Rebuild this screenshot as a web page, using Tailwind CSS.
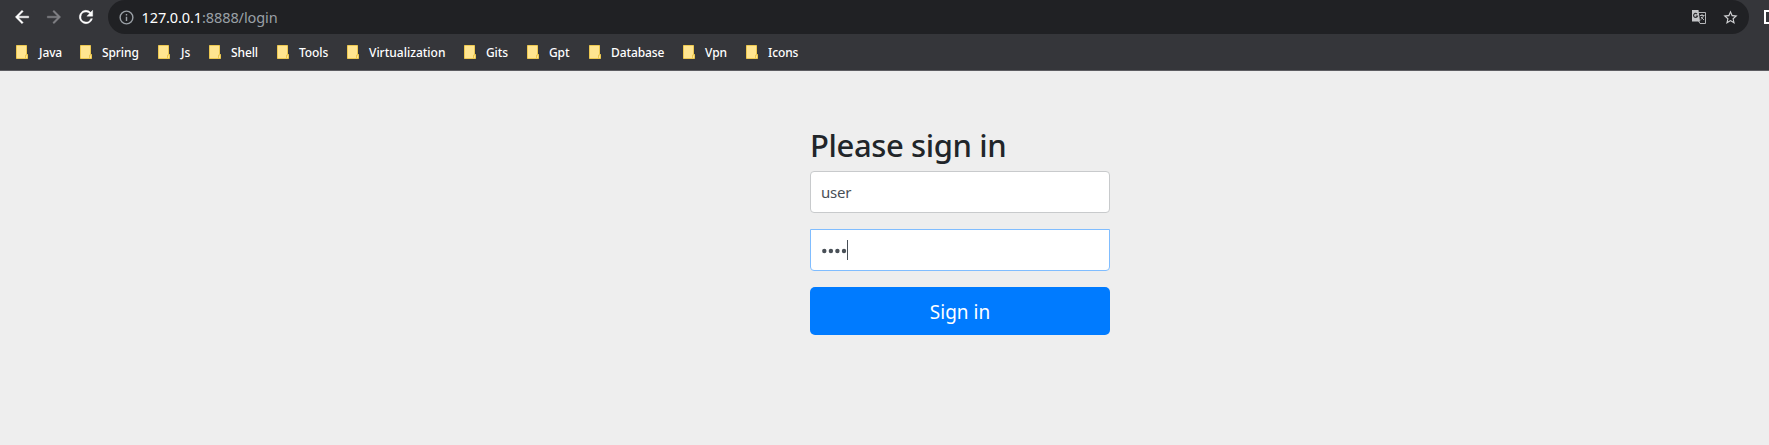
<!DOCTYPE html>
<html lang="en"><head><meta charset="utf-8"><title>Please sign in</title>
<script src="https://cdn.jsdelivr.net/npm/@tailwindcss/browser@4"></script></head>
<body class="w-[1769px] h-[445px] overflow-hidden bg-[#eeeeee] font-['Noto_Sans',sans-serif]">
<svg class="hidden"><symbol id="folder" viewBox="0 0 12 14"><path d="M.5.5h10v9h1v4H.5z" fill="#ffe590" stroke="#edc850"/><path d="M9.500 13.500v-3.500h2" fill="none" stroke="#edc850"/></symbol></svg>
<header class="h-[71px] bg-[#35363a] border-b border-[#5c5c61]">
<div class="flex h-[34px] items-center overflow-hidden">
<nav class="flex w-[108px] shrink-0 items-center pl-3 gap-2">
<svg class="size-5" viewBox="0 0 24 24" fill="#fff" stroke="#fff" stroke-width=".5"><path d="M20 11H7.830l5.590-5.590L12 4l-8 8 8 8 1.410-1.410L7.830 13H20z"/></svg>
<svg class="size-5 ml-1" viewBox="0 0 24 24" fill="#808185" stroke="#808185" stroke-width=".5"><path d="M12 4l-1.410 1.410L16.170 11H4v2h12.170l-5.580 5.590L12 20l8-8z"/></svg>
<svg class="size-5 ml-1" viewBox="0 0 24 24" fill="#fff" stroke="#fff" stroke-width=".5"><path d="M17.650 6.350A8 8 0 1 0 19.730 14h-2.080A6 6 0 1 1 12 6c1.660 0 3.140.690 4.220 1.780L13 11h7V4z"/></svg>
</nav>
<div class="flex h-[34px] w-[1641px] shrink-0 items-center rounded-r-full rounded-l-full bg-[#202124] pl-[9.500px] pr-[10px]">
<svg class="size-[17px]" viewBox="0 0 24 24" fill="#9aa0a6"><path d="M11 7h2v2h-2zm0 4h2v6h-2zm1-9a10 10 0 1 0 0 20 10 10 0 0 0 0-20m0 18a8 8 0 1 1 0-16 8 8 0 0 1 0 16"/></svg>
<span class="ml-[7px] -mt-px text-[14.500px] leading-5 tracking-[-0.1px] text-[#9aa0a6] whitespace-nowrap"><span class="text-white">127.0.0.1</span>:8888/login</span>
<svg class="ml-auto h-4 w-4" viewBox="0 0 16 16"><path d="M1 1h6.500L9 12.500H1z" fill="#c4c5c7"/><path d="M7 3.500h7.500v11H9L7.500 12" fill="none" stroke="#b5b6b8"/><path d="M6 5a2 2 0 1 0 .5 2H4.800" fill="none" stroke="#303134" stroke-width="1.200"/><path d="M9 6.500h4.500M11 5v1.500M12.500 6.500C12 9 10.500 10 9.500 11M10 8l3 3" fill="none" stroke="#b5b6b8"/></svg>
<svg class="ml-[15px] size-[17px]" viewBox="0 0 24 24" fill="#d0d1d3"><path d="m22 9.240-7.190-.620L12 2 9.190 8.630 2 9.240l5.460 4.730L5.820 21 12 17.270 18.180 21l-1.630-7.030zM12 15.400l-3.760 2.270 1-4.280-3.320-2.880 4.380-.380L12 6.100l1.710 4.040 4.380.380-3.320 2.880 1 4.280z"/></svg>
</div>
<svg class="ml-[15px] h-4 w-[5px] shrink-0" viewBox="0 0 5 16"><path d="M6 2H1v12h5" fill="none" stroke="#fff" stroke-width="2"/></svg>
</div>
<div class="flex h-9 items-center pl-4 text-[12px] leading-4 font-medium tracking-[-0.1px] text-white">
<div class="flex w-16 items-center gap-[10px]"><svg class="h-3.5 w-3 shrink-0"><use href="#folder"/></svg><span class="pt-0.5 pl-px">Java</span></div>
<div class="flex w-[78px] items-center gap-[10px]"><svg class="h-3.5 w-3 shrink-0"><use href="#folder"/></svg><span class="pt-0.5">Spring</span></div>
<div class="flex w-[51px] items-center gap-[10px]"><svg class="h-3.5 w-3 shrink-0"><use href="#folder"/></svg><span class="pt-0.5 pl-px">Js</span></div>
<div class="flex w-[68px] items-center gap-[10px]"><svg class="h-3.5 w-3 shrink-0"><use href="#folder"/></svg><span class="pt-0.5">Shell</span></div>
<div class="flex w-[70px] items-center gap-[10px]"><svg class="h-3.5 w-3 shrink-0"><use href="#folder"/></svg><span class="pt-0.5">Tools</span></div>
<div class="flex w-[117px] items-center gap-[10px]"><svg class="h-3.5 w-3 shrink-0"><use href="#folder"/></svg><span class="pt-0.5 tracking-normal">Virtualization</span></div>
<div class="flex w-[63px] items-center gap-[10px]"><svg class="h-3.5 w-3 shrink-0"><use href="#folder"/></svg><span class="pt-0.5">Gits</span></div>
<div class="flex w-[62px] items-center gap-[10px]"><svg class="h-3.5 w-3 shrink-0"><use href="#folder"/></svg><span class="pt-0.5">Gpt</span></div>
<div class="flex w-[94px] items-center gap-[10px]"><svg class="h-3.5 w-3 shrink-0"><use href="#folder"/></svg><span class="pt-0.5">Database</span></div>
<div class="flex w-[63px] items-center gap-[10px]"><svg class="h-3.5 w-3 shrink-0"><use href="#folder"/></svg><span class="pt-0.5">Vpn</span></div>
<div class="flex items-center gap-[10px]"><svg class="h-3.5 w-3 shrink-0"><use href="#folder"/></svg><span class="pt-0.5">Icons</span></div>
</div>
</header>
<main class="ml-[810px] w-[300px] pt-[55px]">
<h1 class="h-[45px] whitespace-nowrap text-[31px] leading-[38px] font-medium tracking-[-0.38px] text-[#212529]">Please sign in</h1>
<div class="flex h-[42px] items-center rounded border border-[#c8cacc] bg-white px-[10px] text-[15px] tracking-[-0.25px] text-[#495057]">user</div>
<div class="mt-4 flex h-[42px] items-center rounded-b border border-[#80bdff] bg-white pl-[11px] text-[#495057]"><svg class="h-5 w-[25px]" viewBox="0 0 25 20" fill="#495057"><circle cx="2.300" cy="11" r="2.200"/><circle cx="8.900" cy="11" r="2.200"/><circle cx="15.400" cy="11" r="2.200"/><circle cx="22" cy="11" r="2.200"/></svg><i class="h-5 w-px bg-[#495057]"></i></div>
<button class="mt-4 block h-12 w-full rounded-[5px] bg-[#007bff] pt-0.5 text-[19px] leading-[30px] text-white">Sign in</button>
</main>
</body></html>
